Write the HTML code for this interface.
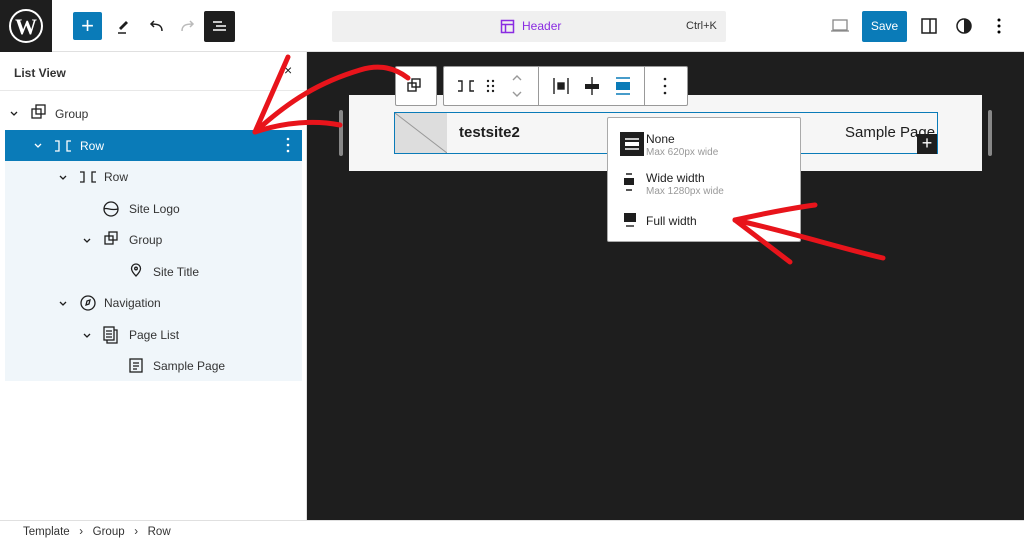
<!DOCTYPE html>
<html><head><meta charset="utf-8"><style>
*{box-sizing:border-box;margin:0;padding:0}
body{width:1024px;height:542px;overflow:hidden;font-family:"Liberation Sans",sans-serif;background:#fff;position:relative;color:#1e1e1e}
.abs{position:absolute}
.row{position:absolute;left:0;font-size:12px;color:#1e1e1e}
.t{position:absolute;font-size:12px}
</style></head><body>
<!-- top bar -->
<div class="abs" style="left:0;top:0;width:1024px;height:52px;border-bottom:1px solid #e0e0e0"></div>
<div class="abs" style="left:0;top:0;width:52px;height:52px;background:#1e1e1e"></div>
<svg class="abs" style="left:8px;top:8px" width="36" height="36" viewBox="0 0 36 36"><circle cx="18" cy="18" r="16" fill="none" stroke="#fff" stroke-width="2"/><text x="18" y="26" text-anchor="middle" fill="#fff" font-family="Liberation Serif" font-weight="bold" font-size="22">W</text></svg>
<div class="abs" style="left:73px;top:12px;width:29px;height:28px;background:#0a7bb8;border-radius:2px;color:#fff;font-size:22px;line-height:27px;text-align:center">+</div>
<svg class="abs" style="left:114px;top:16px" width="20" height="20"><path d="M5 12 L12 5 L14 7 L7 14Z" fill="#1e1e1e"/><path d="M4 17h8" stroke="#1e1e1e" stroke-width="1.5"/></svg>
<svg class="abs" style="left:146px;top:16px" width="20" height="20"><path d="M16 15 C16 9 12 8 5 8 M8 5 L5 8 L8 11" stroke="#1e1e1e" stroke-width="1.5" fill="none"/></svg>
<svg class="abs" style="left:178px;top:16px" width="20" height="20"><path d="M4 15 C4 9 8 8 15 8 M12 5 L15 8 L12 11" stroke="#bbb" stroke-width="1.5" fill="none"/></svg>
<div class="abs" style="left:204px;top:11px;width:31px;height:31px;background:#1e1e1e;border-radius:2px"></div>
<svg class="abs" style="left:204px;top:11px" width="31" height="31"><path d="M9 11h9M12 15h10M9 19h13" stroke="#fff" stroke-width="1.5"/></svg>
<div class="abs" style="left:332px;top:11px;width:394px;height:31px;background:#f0f0f0;border-radius:2px"></div>
<svg class="abs" style="left:500px;top:19px" width="15" height="15"><rect x="1.5" y="1.5" width="12" height="12" fill="none" stroke="#8a2be2" stroke-width="1.5"/><path d="M1.5 5.5h12M5.5 5.5v8" stroke="#8a2be2" stroke-width="1.5"/></svg>
<div class="t" style="left:522px;top:19px;color:#8a2be2">Header</div>
<div class="t" style="left:686px;top:20px;font-size:11px;color:#333">Ctrl+K</div>
<svg class="abs" style="left:830px;top:18px" width="20" height="16"><rect x="3" y="2" width="14" height="10" fill="none" stroke="#888" stroke-width="1.3"/><path d="M1 13h18" stroke="#888" stroke-width="1.3"/></svg>
<div class="abs" style="left:862px;top:11px;width:45px;height:31px;background:#0a7bb8;border-radius:2px;color:#fff;font-size:12px;line-height:31px;text-align:center">Save</div>
<svg class="abs" style="left:920px;top:17px" width="18" height="18"><rect x="2" y="2" width="14" height="14" fill="none" stroke="#1e1e1e" stroke-width="1.5"/><path d="M10 2v14" stroke="#1e1e1e" stroke-width="1.5"/></svg>
<svg class="abs" style="left:955px;top:17px" width="18" height="18"><circle cx="9" cy="9" r="7" fill="none" stroke="#1e1e1e" stroke-width="1.5"/><path d="M9 2a7 7 0 0 1 0 14z" fill="#1e1e1e"/></svg>
<svg class="abs" style="left:990px;top:16px" width="18" height="20"><circle cx="9" cy="4" r="1.5"/><circle cx="9" cy="10" r="1.5"/><circle cx="9" cy="16" r="1.5"/></svg>

<!-- sidebar -->
<div class="abs" style="left:306px;top:52px;width:1px;height:468px;background:#e0e0e0"></div>
<div class="t" style="left:14px;top:66px;font-size:12px;font-weight:bold;color:#333">List View</div>
<div class="t" style="left:284px;top:62px;font-size:14px">×</div>
<div class="abs" style="left:0;top:90px;width:306px;height:1px;background:#e8e8e8"></div>
<div class="abs" style="left:5px;top:161px;width:297px;height:220px;background:#f0f6fa"></div>
<div class="abs" style="left:5px;top:130px;width:297px;height:31px;background:#0a7bb8"></div>
<svg class="abs" style="left:0;top:98px" width="306" height="290" font-family="Liberation Sans" font-size="12">
 <g fill="none" stroke="#1e1e1e" stroke-width="1.3">
  <path d="M11 14l3 3 3-3"/>
  <rect x="32" y="11" width="9" height="9"/><rect x="36" y="7" width="9" height="9"/>
  <path d="M35 46l3 3 3-3" stroke="#fff"/>
  <path d="M55 43h4v10h-4M71 43h-4v10h4" stroke="#fff"/>
  <path d="M60 78l3 3 3-3"/>
  <path d="M80 74h4v10h-4M96 74h-4v10h4"/>
  <circle cx="111" cy="111" r="7"/><path d="M104 111c3-2 6 2 14 0"/>
  <path d="M84 141l3 3 3-3"/>
  <rect x="105" y="138" width="8" height="8"/><rect x="109" y="134" width="8" height="8"/>
  <path d="M136 166a4.5 4.5 0 0 1 4.5 4.5c0 3-4.5 7.5-4.5 7.5s-4.5-4.5-4.5-7.5a4.5 4.5 0 0 1 4.5-4.5z"/><circle cx="136" cy="170.5" r="1.3"/>
  <path d="M60 204l3 3 3-3"/>
  <circle cx="88" cy="205" r="7"/><path d="M86 207l1-4 3-1-1 4z"/>
  <path d="M84 236l3 3 3-3"/>
  <rect x="104" y="229" width="10" height="13"/><path d="M114 232h3v13h-10v-3M106 233h6M106 236h6M106 239h6"/>
  <rect x="130" y="261" width="12" height="13"/><path d="M133 265h6M133 268h6M133 271h4"/>
 </g>
 <text x="55" y="20" fill="#333">Group</text>
 <text x="80" y="52" fill="#fff">Row</text>
 <g fill="#fff"><circle cx="288" cy="41" r="1.3"/><circle cx="288" cy="47" r="1.3"/><circle cx="288" cy="53" r="1.3"/></g>
 <text x="104" y="83" fill="#333">Row</text>
 <text x="129" y="115" fill="#333">Site Logo</text>
 <text x="129" y="146" fill="#333">Group</text>
 <text x="153" y="178" fill="#333">Site Title</text>
 <text x="104" y="209" fill="#333">Navigation</text>
 <text x="129" y="241" fill="#333">Page List</text>
 <text x="153" y="272" fill="#333">Sample Page</text>
</svg>

<!-- canvas -->
<div class="abs" style="left:307px;top:52px;width:717px;height:468px;background:#1e1e1e"></div>
<div class="abs" style="left:339px;top:110px;width:4px;height:46px;background:#888;border-radius:2px"></div>
<div class="abs" style="left:988px;top:110px;width:4px;height:46px;background:#888;border-radius:2px"></div>
<div class="abs" style="left:349px;top:95px;width:633px;height:76px;background:#f6f6f6"></div>
<div class="abs" style="left:394px;top:112px;width:544px;height:42px;border:1.5px solid #0a7bb8;background:#f6f6f6"></div>
<svg class="abs" style="left:395px;top:113px" width="52" height="40"><rect width="52" height="40" fill="#ddd"/><path d="M0 0L52 40" stroke="#999"/></svg>
<div class="t" style="left:459px;top:124px;font-size:15px;font-weight:bold;color:#1e1e1e">testsite2</div>
<div class="t" style="left:845px;top:124px;font-size:15px;color:#1e1e1e;width:92px;overflow:hidden;white-space:nowrap">Sample Page</div>
<div class="abs" style="left:917px;top:134px;width:20px;height:20px;background:#1e1e1e;color:#fff;font-size:18px;line-height:19px;text-align:center">+</div>
<!-- toolbar -->
<div class="abs" style="left:395px;top:66px;width:42px;height:40px;background:#fff;border:1px solid #999;border-radius:2px"></div>
<svg class="abs" style="left:405px;top:76px" width="20" height="20" fill="none" stroke="#1e1e1e" stroke-width="1.4"><rect x="3" y="7" width="8" height="8"/><rect x="7" y="3" width="8" height="8"/></svg>
<div class="abs" style="left:443px;top:66px;width:245px;height:40px;background:#fff;border:1px solid #999;border-radius:2px"></div>
<div class="abs" style="left:538px;top:67px;width:1px;height:38px;background:#999"></div>
<div class="abs" style="left:644px;top:67px;width:1px;height:38px;background:#999"></div>
<svg class="abs" style="left:443px;top:66px" width="245" height="40" fill="none" stroke="#1e1e1e" stroke-width="1.4">
 <path d="M15 15h4v10h-4M31 15h-4v10h4"/>
 <g fill="#1e1e1e" stroke="none"><circle cx="45" cy="15" r="1.2"/><circle cx="50" cy="15" r="1.2"/><circle cx="45" cy="20" r="1.2"/><circle cx="50" cy="20" r="1.2"/><circle cx="45" cy="25" r="1.2"/><circle cx="50" cy="25" r="1.2"/></g>
 <path d="M70 14l4-4 4 4M70 26l4 4 4-4" stroke="#999"/>
 <path d="M111 12v16M125 12v16"/><rect x="115" y="17" width="6" height="6" fill="#1e1e1e"/>
 <path d="M149 11v18"/><rect x="142" y="18" width="14" height="5" fill="#1e1e1e" stroke="none"/>
 <path d="M173 12h14M173 28h14" stroke="#0a7bb8"/><rect x="173" y="16" width="14" height="8" fill="#0a7bb8" stroke="none"/>
 <g fill="#1e1e1e" stroke="none"><circle cx="222" cy="13" r="1.3"/><circle cx="222" cy="20" r="1.3"/><circle cx="222" cy="27" r="1.3"/></g>
</svg>
<!-- dropdown -->
<div class="abs" style="left:607px;top:117px;width:194px;height:125px;background:#fff;border:1px solid #aaa;border-radius:2px"></div>
<svg class="abs" style="left:618px;top:130px" width="30" height="100">
 <rect x="2" y="2" width="24" height="24" fill="#1e1e1e"/><path d="M7 9h14M7 19h14" stroke="#fff" stroke-width="1.4"/><rect x="7" y="12" width="14" height="4" fill="#fff"/>
 <path d="M8 44h6M8 60h6" stroke="#1e1e1e" stroke-width="1.4"/><rect x="6" y="48" width="10" height="7" fill="#1e1e1e"/>
 <rect x="6" y="83" width="12" height="9" fill="#1e1e1e"/><path d="M8 96h8" stroke="#1e1e1e" stroke-width="1.4"/>
</svg>
<div class="t" style="left:646px;top:132px;font-size:12px">None</div>
<div class="t" style="left:646px;top:147px;font-size:10px;color:#999">Max 620px wide</div>
<div class="t" style="left:646px;top:171px;font-size:12px">Wide width</div>
<div class="t" style="left:646px;top:186px;font-size:10px;color:#999">Max 1280px wide</div>
<div class="t" style="left:646px;top:214px;font-size:12px">Full width</div>

<!-- bottom -->
<div class="abs" style="left:0;top:520px;width:1024px;height:1px;background:#e0e0e0"></div>
<div class="t" style="left:23px;top:526px;font-size:11.5px;color:#333">Template &nbsp;&nbsp;›&nbsp;&nbsp; Group &nbsp;&nbsp;›&nbsp;&nbsp; Row</div>

<!-- red arrows -->
<svg class="abs" style="left:0;top:0" width="1024" height="542" fill="none" stroke="#e8141b" stroke-width="5" stroke-linecap="round" stroke-linejoin="round">
 <path d="M408 78 C395 68 380 64 360 70 C320 82 290 100 255 132"/>
 <path d="M255 132 L288 57"/>
 <path d="M255 132 C285 122 315 120 340 125"/>
 <path d="M735 220 C780 210 800 207 815 205"/>
 <path d="M735 220 L790 262"/>
 <path d="M735 220 C790 232 840 248 883 258"/>
</svg>
</body></html>
